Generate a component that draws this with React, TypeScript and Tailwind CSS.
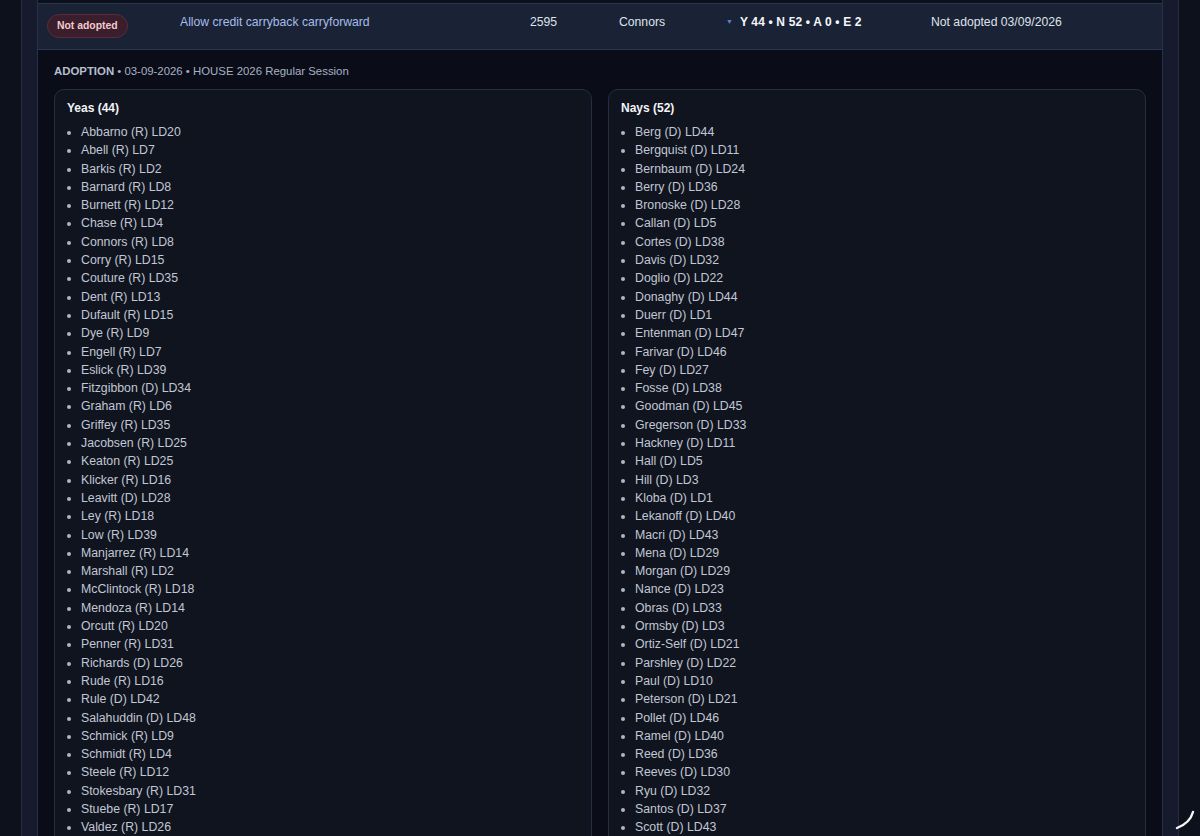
import React from "react"

const yeas = [
  "Abbarno (R) LD20",
  "Abell (R) LD7",
  "Barkis (R) LD2",
  "Barnard (R) LD8",
  "Burnett (R) LD12",
  "Chase (R) LD4",
  "Connors (R) LD8",
  "Corry (R) LD15",
  "Couture (R) LD35",
  "Dent (R) LD13",
  "Dufault (R) LD15",
  "Dye (R) LD9",
  "Engell (R) LD7",
  "Eslick (R) LD39",
  "Fitzgibbon (D) LD34",
  "Graham (R) LD6",
  "Griffey (R) LD35",
  "Jacobsen (R) LD25",
  "Keaton (R) LD25",
  "Klicker (R) LD16",
  "Leavitt (D) LD28",
  "Ley (R) LD18",
  "Low (R) LD39",
  "Manjarrez (R) LD14",
  "Marshall (R) LD2",
  "McClintock (R) LD18",
  "Mendoza (R) LD14",
  "Orcutt (R) LD20",
  "Penner (R) LD31",
  "Richards (D) LD26",
  "Rude (R) LD16",
  "Rule (D) LD42",
  "Salahuddin (D) LD48",
  "Schmick (R) LD9",
  "Schmidt (R) LD4",
  "Steele (R) LD12",
  "Stokesbary (R) LD31",
  "Stuebe (R) LD17",
  "Valdez (R) LD26",
]

const nays = [
  "Berg (D) LD44",
  "Bergquist (D) LD11",
  "Bernbaum (D) LD24",
  "Berry (D) LD36",
  "Bronoske (D) LD28",
  "Callan (D) LD5",
  "Cortes (D) LD38",
  "Davis (D) LD32",
  "Doglio (D) LD22",
  "Donaghy (D) LD44",
  "Duerr (D) LD1",
  "Entenman (D) LD47",
  "Farivar (D) LD46",
  "Fey (D) LD27",
  "Fosse (D) LD38",
  "Goodman (D) LD45",
  "Gregerson (D) LD33",
  "Hackney (D) LD11",
  "Hall (D) LD5",
  "Hill (D) LD3",
  "Kloba (D) LD1",
  "Lekanoff (D) LD40",
  "Macri (D) LD43",
  "Mena (D) LD29",
  "Morgan (D) LD29",
  "Nance (D) LD23",
  "Obras (D) LD33",
  "Ormsby (D) LD3",
  "Ortiz-Self (D) LD21",
  "Parshley (D) LD22",
  "Paul (D) LD10",
  "Peterson (D) LD21",
  "Pollet (D) LD46",
  "Ramel (D) LD40",
  "Reed (D) LD36",
  "Reeves (D) LD30",
  "Ryu (D) LD32",
  "Santos (D) LD37",
  "Scott (D) LD43",
]

function VoteList({ title, names }: { title: string; names: string[] }) {
  return (
    <div className="rounded-[10px] border border-[#262d40] bg-[#10141f] px-3 pt-[10px] pb-4">
      <h4 className="text-[12px] font-bold leading-4 text-[#f1f3f8]">{title}</h4>
      <ul className="mt-[7px] list-disc pl-[14px] text-[12.3px] leading-[18.3px] text-[#c1c7d4] marker:text-[#aeb6c6]">
        {names.map((n) => (
          <li key={n}>{n}</li>
        ))}
      </ul>
    </div>
  )
}

export default function App() {
  return (
    <div
      className="relative h-[836px] overflow-hidden bg-[#0d111c] px-[21px]"
      style={{ fontFamily: '"Liberation Sans", Arial, sans-serif' }}
    >
      <div className="h-full border-x border-[#252c40] bg-[#151b2c] px-[15px]">
        <div className="h-full border-x border-[#283049] bg-[#0a0d18]">
          <div className="h-[3px] bg-[#0c101b]" />
          <div className="flex h-[47px] items-start border-y border-[#2b3450] bg-[#1a2236] pl-[9px] pt-[10px] text-[12.2px] leading-4">
            <div className="w-[133px]">
              <span className="inline-flex h-[24px] items-center rounded-full border border-[#5b2b3a] bg-[#3a1e2b] px-[9px] text-[10.4px] font-bold text-[#f4c9d0]">
                Not adopted
              </span>
            </div>
            <div className="w-[350px] text-[#a6bde8]">Allow credit carryback carryforward</div>
            <div className="w-[89px] text-[#dfe3ea]">2595</div>
            <div className="w-[107px] text-[#dfe3ea]">Connors</div>
            <div className="flex w-[205px] items-center gap-[7px]">
              <span className="text-[7px] text-[#5e7fd6]">▼</span>
              <span className="text-[12px] font-bold tracking-[0.15px] text-[#f4f6fa]">Y 44 • N 52 • A 0 • E 2</span>
            </div>
            <div className="text-[#dfe3ea]">Not adopted 03/09/2026</div>
          </div>
          <div className="px-4 pt-[13px]">
            <p className="text-[11.4px] leading-4 text-[#a8b1c3]">
              <span className="font-bold text-[#b7bfcf]">ADOPTION</span> • 03-09-2026 • HOUSE 2026 Regular Session
            </p>
            <div className="mt-[10px] grid grid-cols-2 gap-4">
              <VoteList title="Yeas (44)" names={yeas} />
              <VoteList title="Nays (52)" names={nays} />
            </div>
          </div>
        </div>
      </div>
      <svg className="absolute bottom-[5px] right-[4px]" width="22" height="22" viewBox="0 0 22 22" fill="none">
        <path d="M19 3 Q16 14 3 19" stroke="#f5f5f5" strokeWidth="2.4" strokeLinecap="round" />
      </svg>
    </div>
  )
}
